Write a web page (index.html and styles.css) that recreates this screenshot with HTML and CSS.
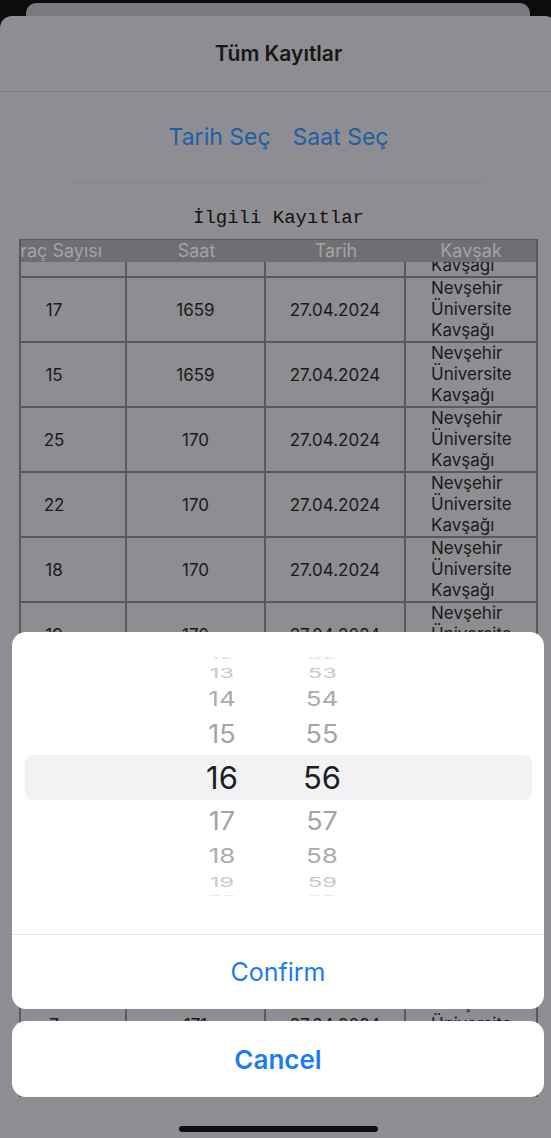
FILE: index.html
```html
<!DOCTYPE html>
<html lang="tr">
<head>
<meta charset="utf-8">
<title>Tüm Kayıtlar</title>
<link rel="stylesheet" href="styles.css">
</head>
<body>
<div class="screen">
  <div class="backcard"></div>
  <div class="sheet">
    <header class="sheet-head"><h1 class="title">Tüm Kayıtlar</h1></header>
    <div class="actions">
      <span class="link">Tarih Seç</span>
      <span class="link">Saat Seç</span>
    </div>
    <div class="divider"></div>
    <h2 class="caption">İlgili Kayıtlar</h2>
    <div class="table">
      <div class="thead">
        <div class="th">Araç Sayısı</div>
        <div class="th">Saat</div>
        <div class="th">Tarih</div>
        <div class="th">Kavşak</div>
      </div>
      <div class="tbody">
        <div class="rows">
          <div class="tr"><div class="td"></div><div class="td"></div><div class="td"></div><div class="td place"><br><br>Kavşağı</div></div>
          <div class="tr"><div class="td">17</div><div class="td">1659</div><div class="td">27.04.2024</div><div class="td place">Nevşehir<br>Üniversite<br>Kavşağı</div></div>
          <div class="tr"><div class="td">15</div><div class="td">1659</div><div class="td">27.04.2024</div><div class="td place">Nevşehir<br>Üniversite<br>Kavşağı</div></div>
          <div class="tr"><div class="td">25</div><div class="td">170</div><div class="td">27.04.2024</div><div class="td place">Nevşehir<br>Üniversite<br>Kavşağı</div></div>
          <div class="tr"><div class="td">22</div><div class="td">170</div><div class="td">27.04.2024</div><div class="td place">Nevşehir<br>Üniversite<br>Kavşağı</div></div>
          <div class="tr"><div class="td">18</div><div class="td">170</div><div class="td">27.04.2024</div><div class="td place">Nevşehir<br>Üniversite<br>Kavşağı</div></div>
          <div class="tr"><div class="td">19</div><div class="td">170</div><div class="td">27.04.2024</div><div class="td place">Nevşehir<br>Üniversite<br>Kavşağı</div></div>
          <div class="tr"><div class="td">12</div><div class="td">170</div><div class="td">27.04.2024</div><div class="td place">Nevşehir<br>Üniversite<br>Kavşağı</div></div>
          <div class="tr"><div class="td">9</div><div class="td">171</div><div class="td">27.04.2024</div><div class="td place">Nevşehir<br>Üniversite<br>Kavşağı</div></div>
          <div class="tr"><div class="td">14</div><div class="td">171</div><div class="td">27.04.2024</div><div class="td place">Nevşehir<br>Üniversite<br>Kavşağı</div></div>
          <div class="tr"><div class="td">11</div><div class="td">171</div><div class="td">27.04.2024</div><div class="td place">Nevşehir<br>Üniversite<br>Kavşağı</div></div>
          <div class="tr"><div class="td">8</div><div class="td">171</div><div class="td">27.04.2024</div><div class="td place">Nevşehir<br>Üniversite<br>Kavşağı</div></div>
          <div class="tr"><div class="td">7</div><div class="td">171</div><div class="td">27.04.2024</div><div class="td place">Nevşehir<br>Üniversite<br>Kavşağı</div></div>
        </div>
      </div>
    </div>
  </div>

  <div class="action-sheet">
    <div class="card">
      <div class="picker">
        <div class="wheel">
          <div class="pr r-a"><span>12</span><span>52</span></div>
          <div class="pr r-b"><span>13</span><span>53</span></div>
          <div class="pr r-c"><span>14</span><span>54</span></div>
          <div class="pr r-d"><span>15</span><span>55</span></div>
          <div class="pr r-sel"><span>16</span><span>56</span></div>
          <div class="pr r-e"><span>17</span><span>57</span></div>
          <div class="pr r-f"><span>18</span><span>58</span></div>
          <div class="pr r-g"><span>19</span><span>59</span></div>
          <div class="pr r-h"><span>20</span><span>00</span></div>
        </div>
      </div>
      <button class="btn confirm">Confirm</button>
    </div>
    <div class="card">
      <button class="btn cancel">Cancel</button>
    </div>
  </div>
  <div class="home-indicator"></div>
</div>
</body>
</html>
```

FILE: styles.css
```css
html, body {
  margin: 0;
  height: 100%;
}
body {
  background: #0c0c0e;
  overflow: hidden;
  font-family: Inter, "Noto Sans", "Liberation Sans", sans-serif;
}
.screen {
  position: relative;
  width: 557px;
  height: 1138px;
  display: flex;
  flex-direction: column;
}
.backcard {
  height: 13px;
  margin: 3px 27px 0 26px;
  background: #7a797d;
  border-radius: 10px 10px 0 0;
}
.sheet {
  flex: 1;
  min-height: 0;
  padding-bottom: 41px;
  background: #8e8d91;
  border-radius: 12px 12px 0 0;
  display: flex;
  flex-direction: column;
  overflow: hidden;
}
.sheet-head {
  height: 75px;
  border-bottom: 1px solid #7a797d;
  display: flex;
  align-items: center;
  justify-content: center;
}
.title {
  margin: 0;
  font-size: 21px;
  font-weight: 600;
  color: #171718;
}
.actions {
  height: 90px;
  display: flex;
  align-items: center;
  justify-content: center;
  gap: 22px;
}
.link {
  font-size: 23px;
  color: #1e5fa5;
}
.divider {
  height: 1px;
  margin: 0 72px;
  background: #858488;
}
.caption {
  margin: 0;
  padding-top: 24px;
  margin-bottom: 10px;
  font-family: "Liberation Mono", "DejaVu Sans Mono", monospace;
  font-weight: 400;
  font-size: 19px;
  line-height: 22px;
  text-align: center;
  color: #111;
}
.table {
  flex: 1;
  min-height: 0;
  margin: 0 19px;
  display: flex;
  flex-direction: column;
  border: 2px solid #5a595d;
  border-top-width: 1px;
  border-bottom: 0;
  overflow: hidden;
}
.thead {
  display: grid;
  grid-template-columns: 144px 139px 140px 130px;
  margin-left: -38px;
  height: 22px;
  background: #6f6e72;
}
.th {
  text-align: center;
  white-space: nowrap;
  font-size: 18px;
  line-height: 22px;
  color: #a4a3a7;
}
.tbody {
  flex: 1;
  min-height: 0;
  overflow: hidden;
}
.rows {
  margin-left: -38px;
  margin-top: -49px;
}
.tr {
  display: grid;
  grid-template-columns: 144px 139px 140px 130px;
  height: 63px;
  border-bottom: 2px solid #5a595d;
}
.td {
  display: flex;
  align-items: center;
  justify-content: center;
  border-right: 2px solid #5a595d;
  font-size: 17px;
  color: #1a1a1c;
}
.td.place {
  border-right: 0;
  justify-content: flex-start;
  padding-left: 25px;
  line-height: 21px;
}

/* action sheet */
.action-sheet {
  position: absolute;
  left: 12px;
  right: 13px;
  bottom: 41px;
  display: flex;
  flex-direction: column;
  gap: 12px;
}
.card {
  background: #ffffff;
  border-radius: 14px;
  overflow: hidden;
}
.picker {
  padding: 25px 0 38px;
}
.wheel {
  height: 239px;
  overflow: hidden;
}
.pr {
  display: grid;
  grid-template-columns: 100px 100px;
  padding-left: 160px;
  align-items: center;
  justify-items: center;
}
.pr span {
  display: inline-block;
}
.r-a { margin-top: -12px; height: 16px; line-height: 1; font-size: 24px; color: #dcdcdf; }
.r-a span { transform: scaleY(0.3); }
.r-b { height: 24px; line-height: 24px; font-size: 25px; color: #c8c8cb; }
.r-b span { transform: scale(0.95, 0.55); }
.r-c { height: 28px; line-height: 28px; font-size: 26px; color: #ababae; }
.r-c span { transform: scaleY(0.78); }
.r-d { height: 42px; line-height: 42px; font-size: 27px; color: #a3a3a6; }
.r-d span { transform: scaleY(0.95); }
.r-sel {
  height: 45px;
  line-height: 45px;
  margin: 0 12px 0 13px;
  padding-left: 147px;
  border-radius: 8px;
  background: #f2f2f4;
  font-size: 31px;
  color: #1d1d1f;
}
.r-e { height: 41px; line-height: 41px; font-size: 27px; color: #a3a3a6; }
.r-e span { transform: scaleY(0.95); }
.r-f { height: 29px; line-height: 29px; font-size: 26px; color: #ababae; }
.r-f span { transform: scaleY(0.78); }
.r-g { height: 24px; line-height: 24px; font-size: 25px; color: #c8c8cb; }
.r-g span { transform: scale(0.95, 0.55); }
.r-h { height: 10px; line-height: 10px; font-size: 24px; color: #dcdcdf; }
.r-h span { transform: scaleY(0.3); }

.btn {
  display: block;
  width: 100%;
  margin: 0;
  padding: 0;
  border: 0;
  background: none;
  font-family: Inter, "Noto Sans", "Liberation Sans", sans-serif;
  color: #1a7cf0;
}
.confirm {
  height: 75px;
  border-top: 1px solid #e6e6ea;
  font-size: 25px;
  font-weight: 400;
}
.cancel {
  height: 76px;
  font-size: 26px;
  font-weight: 600;
}
.home-indicator {
  position: absolute;
  left: 179px;
  bottom: 6px;
  width: 199px;
  height: 6px;
  border-radius: 3px;
  background: #0e0e10;
}
```
